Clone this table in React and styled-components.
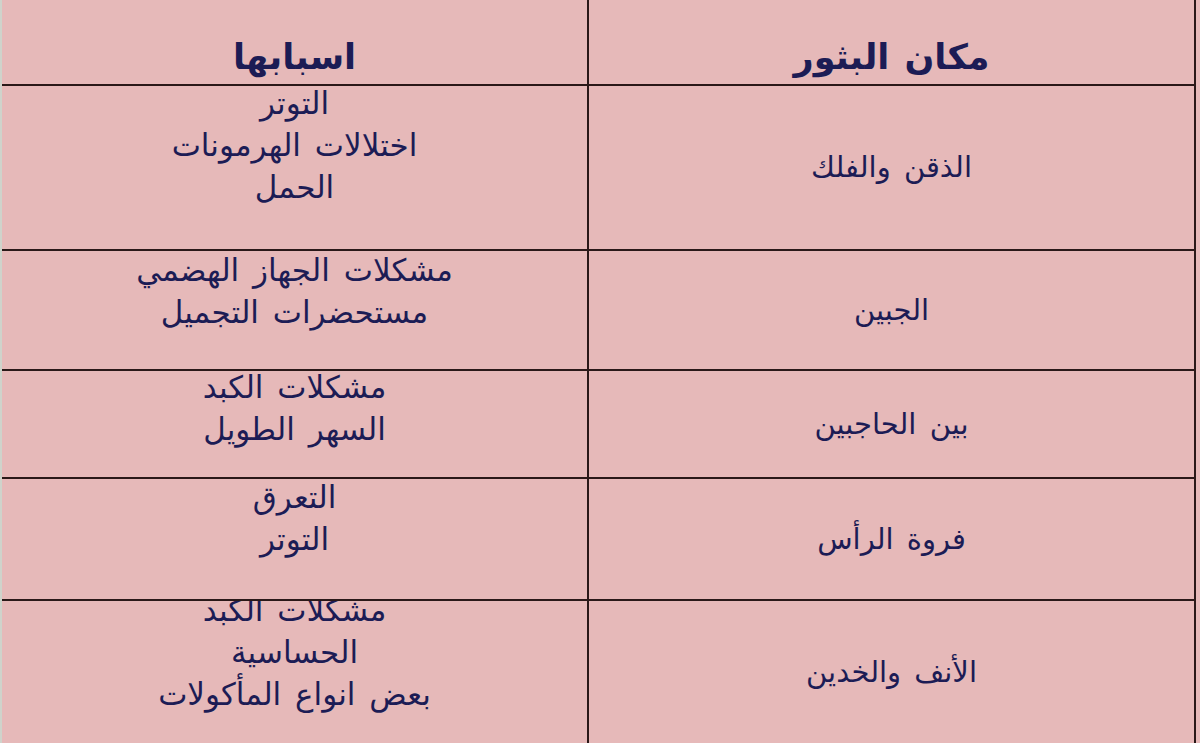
import React from "react";
import styled, { createGlobalStyle } from "styled-components";

const Global = createGlobalStyle`
  html, body { margin: 0; padding: 0; background: #e6b9b9; }
  body { width: 1200px; height: 743px; overflow: hidden; }
`;

const Table = styled.div`
  display: grid;
  grid-template-columns: 587px 607px;
  grid-template-rows: 86px 165px 120px 108px 122px 142px;
  width: 1200px;
  height: 743px;
  box-sizing: border-box;
  border-left: 2px solid #cfd3cb;
  background: #e6b9b9;
  color: #1c1c55;
  font-family: "DejaVu Sans", "Noto Sans", sans-serif;
`;

const Cell = styled.div`
  box-sizing: border-box;
  overflow: hidden;
  direction: rtl;
  border-bottom: ${(p) => (p.$last ? "none" : "2px solid #2a1818")};
  border-right: 2px solid #2a1818;
  display: flex;
  flex-direction: column;
  align-items: center;
  text-align: center;
`;

const HeaderCell = styled(Cell)`
  justify-content: flex-end;
  padding-bottom: 8px;
  font-size: 35px;
  font-weight: bold;
  line-height: 1.1;
  word-spacing: 3px;
`;

const PlaceCell = styled(Cell)`
  justify-content: center;
  font-size: 29px;
  line-height: 1.2;
  word-spacing: 4px;
`;

const CauseCell = styled(Cell)`
  justify-content: flex-start;
  font-size: 31px;
  word-spacing: 4px;
`;

const Lines = styled.div`
  margin-top: ${(p) => p.$offset}px;
  line-height: 42px;
`;

const Line = styled.div`
  white-space: nowrap;
`;

const rows = [
  { place: "الذقن والفلك", causes: ["التوتر", "اختلالات الهرمونات", "الحمل"], offset: -4 },
  { place: "الجبين", causes: ["مشكلات الجهاز الهضمي", "مستحضرات التجميل"], offset: -2 },
  { place: "بين الحاجبين", causes: ["مشكلات الكبد", "السهر الطويل"], offset: -5 },
  { place: "فروة الرأس", causes: ["التعرق", "التوتر"], offset: -3 },
  { place: "الأنف والخدين", causes: ["مشكلات الكبد", "الحساسية", "بعض انواع المأكولات"], offset: -12 },
];

export default function App() {
  return (
    <>
      <Global />
      <Table>
        <HeaderCell>اسبابها</HeaderCell>
        <HeaderCell>مكان البثور</HeaderCell>
        {rows.map((r, i) => {
          const last = i === rows.length - 1;
          return (
            <React.Fragment key={i}>
              <CauseCell $last={last}>
                <Lines $offset={r.offset}>
                  {r.causes.map((c, j) => (
                    <Line key={j}>{c}</Line>
                  ))}
                </Lines>
              </CauseCell>
              <PlaceCell $last={last}>{r.place}</PlaceCell>
            </React.Fragment>
          );
        })}
      </Table>
    </>
  );
}
